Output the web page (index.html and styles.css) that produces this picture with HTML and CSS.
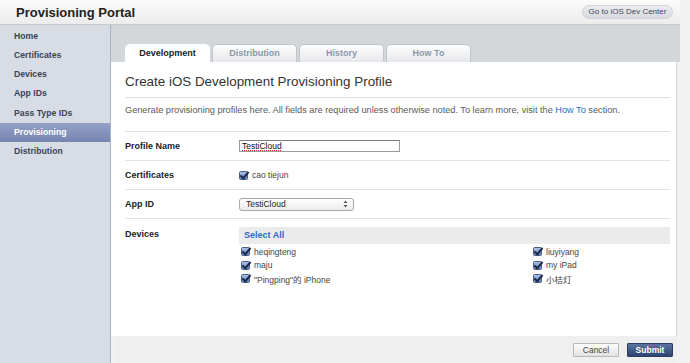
FILE: index.html
```html
<!DOCTYPE html>
<html>
<head>
<meta charset="utf-8">
<link rel="stylesheet" href="styles.css">
</head>
<body>
<div class="page">
  <header class="header">
    <div class="brand">Provisioning Portal</div>
    <a class="dev-center">Go to iOS Dev Center</a>
  </header>
  <div class="layout">
    <nav class="sidebar">
      <a class="nav-item">Home</a>
      <a class="nav-item">Certificates</a>
      <a class="nav-item">Devices</a>
      <a class="nav-item">App IDs</a>
      <a class="nav-item">Pass Type IDs</a>
      <a class="nav-item active">Provisioning</a>
      <a class="nav-item">Distribution</a>
    </nav>
    <main class="main">
      <div class="tabbar">
        <div class="tab active">Development</div>
        <div class="tab">Distribution</div>
        <div class="tab">History</div>
        <div class="tab">How To</div>
      </div>
      <section class="panel">
        <h1 class="title">Create iOS Development Provisioning Profile</h1>
        <p class="desc">Generate provisioning profiles here. All fields are required unless otherwise noted. To learn more, visit the <a class="link">How To</a> section.</p>
        <div class="row">
          <div class="label">Profile Name</div>
          <div class="value"><div class="input"><span class="spell">TestiCloud</span></div></div>
        </div>
        <div class="row">
          <div class="label">Certificates</div>
          <div class="value"><span class="check"></span><span class="opt">cao tiejun</span></div>
        </div>
        <div class="row">
          <div class="label">App ID</div>
          <div class="value"><div class="select"><span>TestiCloud</span><svg class="arrows" width="5" height="8" viewBox="0 0 5 8"><path d="M2.5 0.5L4.5 3H0.5Z M2.5 7.5L4.5 5H0.5Z" fill="#555"/></svg></div></div>
        </div>
        <div class="row devices-row">
          <div class="label">Devices</div>
          <div class="devices">
            <div class="select-all">Select All</div>
            <div class="device-grid">
              <div class="device"><span class="check"></span><span class="opt">heqingteng</span></div>
              <div class="device"><span class="check"></span><span class="opt">liuyiyang</span></div>
              <div class="device"><span class="check"></span><span class="opt">maju</span></div>
              <div class="device"><span class="check"></span><span class="opt">my iPad</span></div>
              <div class="device"><span class="check"></span><span class="opt">"Pingping"的 iPhone</span></div>
              <div class="device"><span class="check"></span><span class="opt">小桔灯</span></div>
            </div>
          </div>
        </div>
      </section>
      <footer class="footer">
        <button class="btn cancel">Cancel</button>
        <button class="btn submit">Submit</button>
      </footer>
    </main>
  </div>
</div>
</body>
</html>
```

FILE: styles.css
```css
* { box-sizing: border-box; }
html, body { margin: 0; padding: 0; }
body {
  background: #f1f1f1;
  font-family: "Liberation Sans", "Noto Sans CJK SC", sans-serif;
  color: #333;
  height: 363px;
  overflow: hidden;
}
.page { width: 680px; }
.header {
  height: 25px;
  background: linear-gradient(#fbfbfb, #ececec);
  border-bottom: 1px solid #c9c9c9;
  display: flex;
  align-items: center;
  justify-content: space-between;
  padding: 0 7px 0 16px;
}
.brand { font-weight: bold; font-size: 13px; color: #222; }
.dev-center {
  font-size: 8px;
  color: #3f4a5a;
  background: linear-gradient(#e9ebee, #d7dade);
  border: 1px solid #d0d3d8;
  border-radius: 8px;
  height: 14px;
  line-height: 12px;
  width: 91px;
  white-space: nowrap;
  text-align: center;
}
.layout { display: flex; height: 338px; }
.sidebar {
  width: 111px;
  background: #d8dde5;
  border-right: 1px solid #a8b5c8;
  padding-top: 1.5px;
  display: flex;
  flex-direction: column;
}
.nav-item {
  height: 19.33px;
  line-height: 19.33px;
  padding-left: 14px;
  font-size: 8.7px;
  font-weight: bold;
  color: #3d4350;
}
.nav-item.active {
  background: linear-gradient(#95a2c6, #7584b0);
  color: #fff;
}
.main { flex: 1; display: flex; flex-direction: column; }
.tabbar {
  height: 37px;
  background: #d4d7da;
  display: flex;
  align-items: flex-end;
  padding-left: 14px;
  gap: 2px;
}
.tab {
  width: 85px;
  height: 18px;
  border-radius: 5px 5px 0 0;
  background: linear-gradient(#fdfdfd, #e6e8ec);
  border: 1px solid #c2c6cc;
  border-bottom: none;
  font-size: 9px;
  font-weight: bold;
  color: #8b97aa;
  text-align: center;
  line-height: 17px;
}
.tab.active { background: #fff; border-color: #fff; color: #222; }
.panel {
  height: 274px;
  background: #fff;
  border-right: 1px solid #d3d3d3;
  margin-right: 3px;
  padding: 0 6px 0 14px;
}
.title {
  margin: 0;
  font-weight: normal;
  font-size: 13.4px;
  color: #333;
  line-height: 17px;
  padding: 11px 0 7px;
  border-bottom: 1px solid #e0e0e0;
}
.desc {
  margin: 0;
  font-size: 9.2px;
  color: #5a5a5a;
  line-height: 12px;
  padding: 6px 0 15px;
  border-bottom: 1px solid #e0e0e0;
}
.link { color: #2a6cc4; }
.row {
  display: flex;
  align-items: center;
  height: 29px;
  border-bottom: 1px solid #e2e2e2;
}
.label {
  width: 114px;
  font-size: 9px;
  font-weight: bold;
  color: #222;
}
.value { display: flex; align-items: center; }
.input {
  width: 161px;
  height: 12px;
  border: 1px solid #9b9b9b;
  border-top-color: #7c7c7c;
  font-size: 8.5px;
  line-height: 10px;
  padding-left: 2px;
  color: #111;
}
.spell {
  text-decoration: underline dotted #e02020;
  text-underline-offset: 1px;
}
.select {
  width: 115px;
  height: 13px;
  border: 1px solid #a8a8a8;
  border-radius: 3px;
  background: linear-gradient(#ffffff, #ececec);
  font-size: 8.5px;
  color: #222;
  display: flex;
  align-items: center;
  justify-content: space-between;
  padding: 0 5px 0 6px;
}
.arrows { display: block; }
.check {
  display: inline-block;
  position: relative;
  width: 9px;
  height: 9px;
  border: 1px solid #4a5d86;
  border-radius: 1.5px;
  background: linear-gradient(#a9bfe5, #5e82c4);
  margin-right: 4px;
  flex: none;
}
.check::after {
  content: "";
  position: absolute;
  left: 1.5px;
  top: -2px;
  width: 3px;
  height: 7px;
  border: solid #1d2a48;
  border-width: 0 2px 2px 0;
  transform: rotate(40deg);
}
.opt { font-size: 8.5px; color: #444; }
.devices-row { align-items: flex-start; height: auto; border-bottom: none; padding-top: 8px; }
.devices-row .label { line-height: 15px; }
.devices { flex: 1; }
.select-all {
  height: 17px;
  background: #ebebeb;
  color: #2a6cc4;
  font-weight: bold;
  font-size: 9px;
  line-height: 17px;
  padding-left: 5px;
}
.device-grid {
  display: grid;
  grid-template-columns: 292px 1fr;
  padding-left: 2px;
  padding-top: 1px;
}
.device { display: flex; align-items: center; height: 13.5px; }
.footer {
  flex: 1;
  margin-left: 5px;
  margin-right: 3px;
  background: #efefef;
  display: flex;
  justify-content: flex-end;
  align-items: center;
  gap: 8px;
  padding: 0 4px 0 0;
}
.btn {
  width: 46px;
  height: 14px;
  font-family: "Liberation Sans", sans-serif;
  font-size: 8.5px;
  padding: 0;
  border-radius: 1px;
}
.cancel {
  background: linear-gradient(#fdfdfd, #e3e3e3);
  border: 1px solid #b8b8b8;
  color: #444;
}
.submit {
  background: linear-gradient(#5a74a0, #2c4570);
  border: 1px solid #2a3f66;
  color: #fff;
  font-weight: bold;
}
```
